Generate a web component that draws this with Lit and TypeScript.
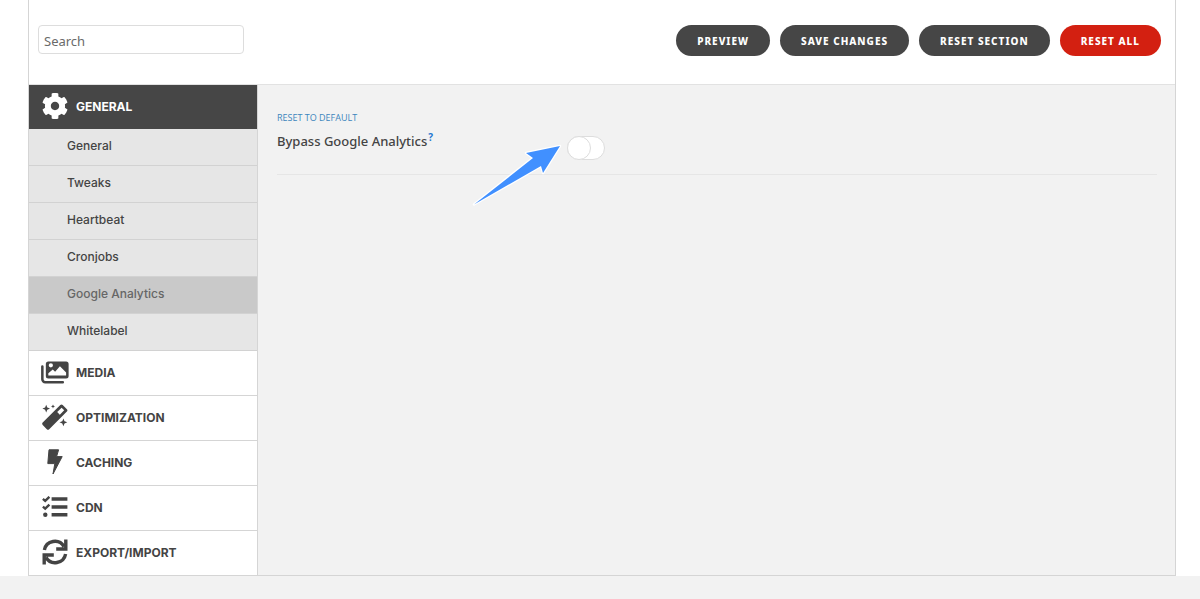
import { LitElement, html, svg, css } from "lit";
import { customElement, property, state } from "lit/decorators.js";

const icons: Record<string, unknown> = {
  gear: svg`<svg viewBox="8 8 496 496" width="26" height="26"><path fill="currentColor" d="M487.4 315.7l-42.6-24.6c4.3-23.2 4.3-47 0-70.2l42.6-24.6c4.9-2.8 7.1-8.6 5.5-14-11.1-35.6-30-67.8-54.7-94.6-3.8-4.1-10-5.1-14.8-2.3L380.8 110c-17.9-15.4-38.5-27.3-60.8-35.1V25.8c0-5.6-3.9-10.5-9.4-11.7-36.7-8.2-74.3-7.8-109.2 0-5.5 1.2-9.4 6.1-9.4 11.7V75c-22.2 7.9-42.8 19.8-60.8 35.1L88.7 85.5c-4.9-2.8-11-1.9-14.8 2.3-24.7 26.7-43.6 58.9-54.7 94.6-1.7 5.4.6 11.2 5.5 14L67.3 221c-4.3 23.2-4.3 47 0 70.2l-42.6 24.6c-4.9 2.8-7.1 8.6-5.5 14 11.1 35.6 30 67.8 54.7 94.6 3.8 4.1 10 5.1 14.8 2.3l42.6-24.6c17.9 15.4 38.5 27.3 60.8 35.1v49.2c0 5.6 3.9 10.5 9.4 11.7 36.7 8.2 74.3 7.8 109.2 0 5.5-1.2 9.4-6.1 9.4-11.7v-49.2c22.2-7.9 42.8-19.8 60.8-35.1l42.6 24.6c4.9 2.8 11 1.9 14.8-2.3 24.7-26.7 43.6-58.9 54.7-94.6 1.5-5.5-.7-11.3-5.6-14.1zM256 336c-44.1 0-80-35.9-80-80s35.9-80 80-80 80 35.9 80 80-35.9 80-80 80z"/></svg>`,
  images: svg`<svg viewBox="0 0 29 23" width="29" height="23"><path fill="none" stroke="currentColor" stroke-width="2.6" stroke-linecap="round" d="M1.4 5.2V18.6a3 3 0 0 0 3 3H22.6"/><path fill="currentColor" fill-rule="evenodd" d="M7.6 0H26a2.6 2.6 0 0 1 2.6 2.6V15A2.6 2.6 0 0 1 26 17.6H7.6A2.6 2.6 0 0 1 5 15V2.6A2.6 2.6 0 0 1 7.6 0zM10.2 1.8a2.2 2.2 0 1 0 0 4.4a2.2 2.2 0 0 0 0-4.4zM7.6 14.6H26V11.4L19.6 5L14.6 10.6L12.2 8.4L7.6 12.4z"/></svg>`,
  wand: svg`<svg viewBox="0 0 26 26" width="26" height="26"><path fill="currentColor" fill-rule="evenodd" d="M18.3 1a1.8 1.8 0 0 1 2.4 0l4.2 4.2a1.8 1.8 0 0 1 0 2.4L7.2 25.2a1.8 1.8 0 0 1-2.4 0l-4.1-4.2a1.8 1.8 0 0 1 0-2.4zM19.6 3.7L15.2 8.1L17.8 10.7L22.2 6.3z"/><path fill="currentColor" d="M4.2 .8L5.3 3.5L8 4.6L5.3 5.7L4.2 8.4L3.1 5.7L.4 4.6L3.1 3.5zM11 .4L11.6 1.8L13 2.4L11.6 3L11 4.4L10.4 3L9 2.4L10.4 1.8zM21.4 14.4L22.5 17.2L25.3 18.3L22.5 19.4L21.4 22.2L20.3 19.4L17.5 18.3L20.3 17.2z"/></svg>`,
  bolt: svg`<svg viewBox="0 0 16 26" width="16" height="26"><path fill="currentColor" stroke="currentColor" stroke-width="1" stroke-linejoin="round" d="M2 .8H11.6L9.6 7.6H15.2L6 25L7.8 14.6H.8z"/></svg>`,
  list: svg`<svg viewBox="0 0 26 22" width="26" height="22"><path fill="none" stroke="currentColor" stroke-width="2.4" d="M.9 2.8L3.2 4.8L7.4 .8M.9 10.6L3.2 12.6L7.4 8.6"/><circle cx="3.3" cy="18.8" r="2.2" fill="currentColor"/><path fill="none" stroke="currentColor" stroke-width="3.6" stroke-linejoin="round" d="M9.6 3H25.4M9.6 11H25.4M9.6 18.8H25.4"/></svg>`,
  sync: svg`<svg viewBox="0 0 26 26" width="26" height="26"><path fill="none" stroke="currentColor" stroke-width="3.4" d="M2.4 11A10.6 10.6 0 0 1 22 7.6M23.6 15A10.6 10.6 0 0 1 4 18.4M14.2 10H23.8V.4M11.8 16H2.2V25.6"/></svg>`,
};

@customElement("side-nav")
class SideNav extends LitElement {
  @property({ type: Array }) sections: { icon: string; label: string }[] = [];
  @property({ type: Array }) pages: string[] = [];
  @state() current = "Google Analytics";

  static styles = css`
    :host { display: block; background: #fff; border-right: 1px solid #d5d5d5; font-family: Inter, "Liberation Sans", sans-serif; }
    ul { list-style: none; margin: 0; padding: 0; }
    a { display: flex; align-items: center; box-sizing: border-box; color: #444; text-decoration: none; }
    .section { height: 45px; padding: 0 0 2px 12px; gap: 7px; border-bottom: 1px solid #d5d5d5; font-size: 12px; font-weight: 700; text-transform: uppercase; }
    li:last-child > .section { height: 44px; border-bottom: 0; }
    .section.open { height: 44px; background: #464646; color: #fff; border-bottom: 0; }
    .icon { display: flex; justify-content: center; width: 28px; }
    .page { height: 37px; padding: 0 0 3px 38px; background: #e6e6e6; border-bottom: 1px solid #d2d2d2; font-size: 12px; font-weight: 500; }
    .page.current { background: #c9c9c9; color: #666; }
  `;

  render() {
    return html`<nav><ul>${this.sections.map((s, i) => html`<li>
      <a class="section ${i === 0 ? "open" : ""}" href="#"><span class="icon">${icons[s.icon]}</span><span>${s.label}</span></a>
      ${i === 0 ? html`<ul>${this.pages.map((p) => html`<li><a class="page ${p === this.current ? "current" : ""}" href="#" @click=${() => (this.current = p)}>${p}</a></li>`)}</ul>` : null}
    </li>`)}</ul></nav>`;
  }
}

@customElement("app-root")
class AppRoot extends LitElement {
  static styles = css`
    :host { display: block; min-height: 100vh; background: #f2f2f2; color: #444; font-family: "Open Sans", "Noto Sans", sans-serif; }
    .page { background: #fff; padding: 0 24px 0 28px; }
    .frame { border: 1px solid #d5d5d5; border-top: 0; }
    header { display: flex; justify-content: space-between; align-items: flex-start; height: 85px; box-sizing: border-box; padding: 25px 14px 0 9px; border-bottom: 1px solid #e2e2e2; }
    .search { box-sizing: border-box; width: 206px; height: 29px; padding: 2px 5px 0; border: 1px solid #ddd; border-radius: 4px; background: #fff; color: #444; font: 13px "Noto Sans", sans-serif; }
    .search::placeholder { color: #6a6a6a; opacity: 1; }
    .actions { display: flex; gap: 10px; }
    button { height: 31px; padding: 0 21px; border: 0; border-radius: 16px; background: #464646; color: #fff; font: 800 10px "Noto Sans", sans-serif; letter-spacing: 1px; text-transform: uppercase; }
    .danger { background: #d32011; }
    .body { display: grid; grid-template-columns: 229px 1fr; }
    main { background: #f2f2f2; padding: 25px 18px 0 19px; }
    .field { display: grid; grid-template-columns: 290px 1fr; height: 64px; border-bottom: 1px solid #e6e6e6; position: relative; }
    .reset { display: block; color: #3c86bd; font-size: 9px; line-height: 16px; text-decoration: none; text-transform: uppercase; }
    .name { font: 500 13px/20px "Noto Sans", sans-serif; display: inline-block; padding-top: 5px; }
    .help { margin-left: 1px; color: #1f78d1; font: 700 10px/10px "Open Sans", sans-serif; text-decoration: none; vertical-align: 5px; }
    .toggle { appearance: none; box-sizing: border-box; width: 38px; height: 24px; margin: 26px 0 0; border: 1px solid #ddd; border-radius: 12px; background: #fff; }
    .toggle::before { content: ""; display: block; box-sizing: border-box; width: 24px; height: 24px; margin: -1px; border: 1px solid #ddd; border-radius: 50%; background: #fff; }
    .toggle:checked { background: #4390ff; }
    .toggle:checked::before { margin-left: 13px; }
    .pointer { position: absolute; left: 194px; top: 32px; }
  `;

  render() {
    return html`<div class="page"><div class="frame">
      <header>
        <input class="search" type="search" placeholder="Search" aria-label="Search">
        <div class="actions">
          <button>Preview</button><button>Save changes</button><button>Reset section</button><button class="danger">Reset all</button>
        </div>
      </header>
      <div class="body">
        <side-nav
          .sections=${[
            { icon: "gear", label: "General" },
            { icon: "images", label: "Media" },
            { icon: "wand", label: "Optimization" },
            { icon: "bolt", label: "Caching" },
            { icon: "list", label: "CDN" },
            { icon: "sync", label: "Export/Import" },
          ]}
          .pages=${["General", "Tweaks", "Heartbeat", "Cronjobs", "Google Analytics", "Whitelabel"]}></side-nav>
        <main>
          <div class="field">
            <div>
              <a class="reset" href="#">Reset to default</a>
              <label class="name" for="bypass">Bypass Google Analytics</label><a class="help" href="#">?</a>
            </div>
            <div><input class="toggle" id="bypass" type="checkbox"></div>
            <svg class="pointer" width="92" height="64" viewBox="0 0 92 64" aria-hidden="true"><path fill="#4190ff" stroke="#fff" stroke-width="2.5" stroke-linejoin="round" paint-order="stroke" d="M3 62.5L62 16L55 11L89 4L72 31L70 24z"/></svg>
          </div>
        </main>
      </div>
    </div></div>`;
  }
}
